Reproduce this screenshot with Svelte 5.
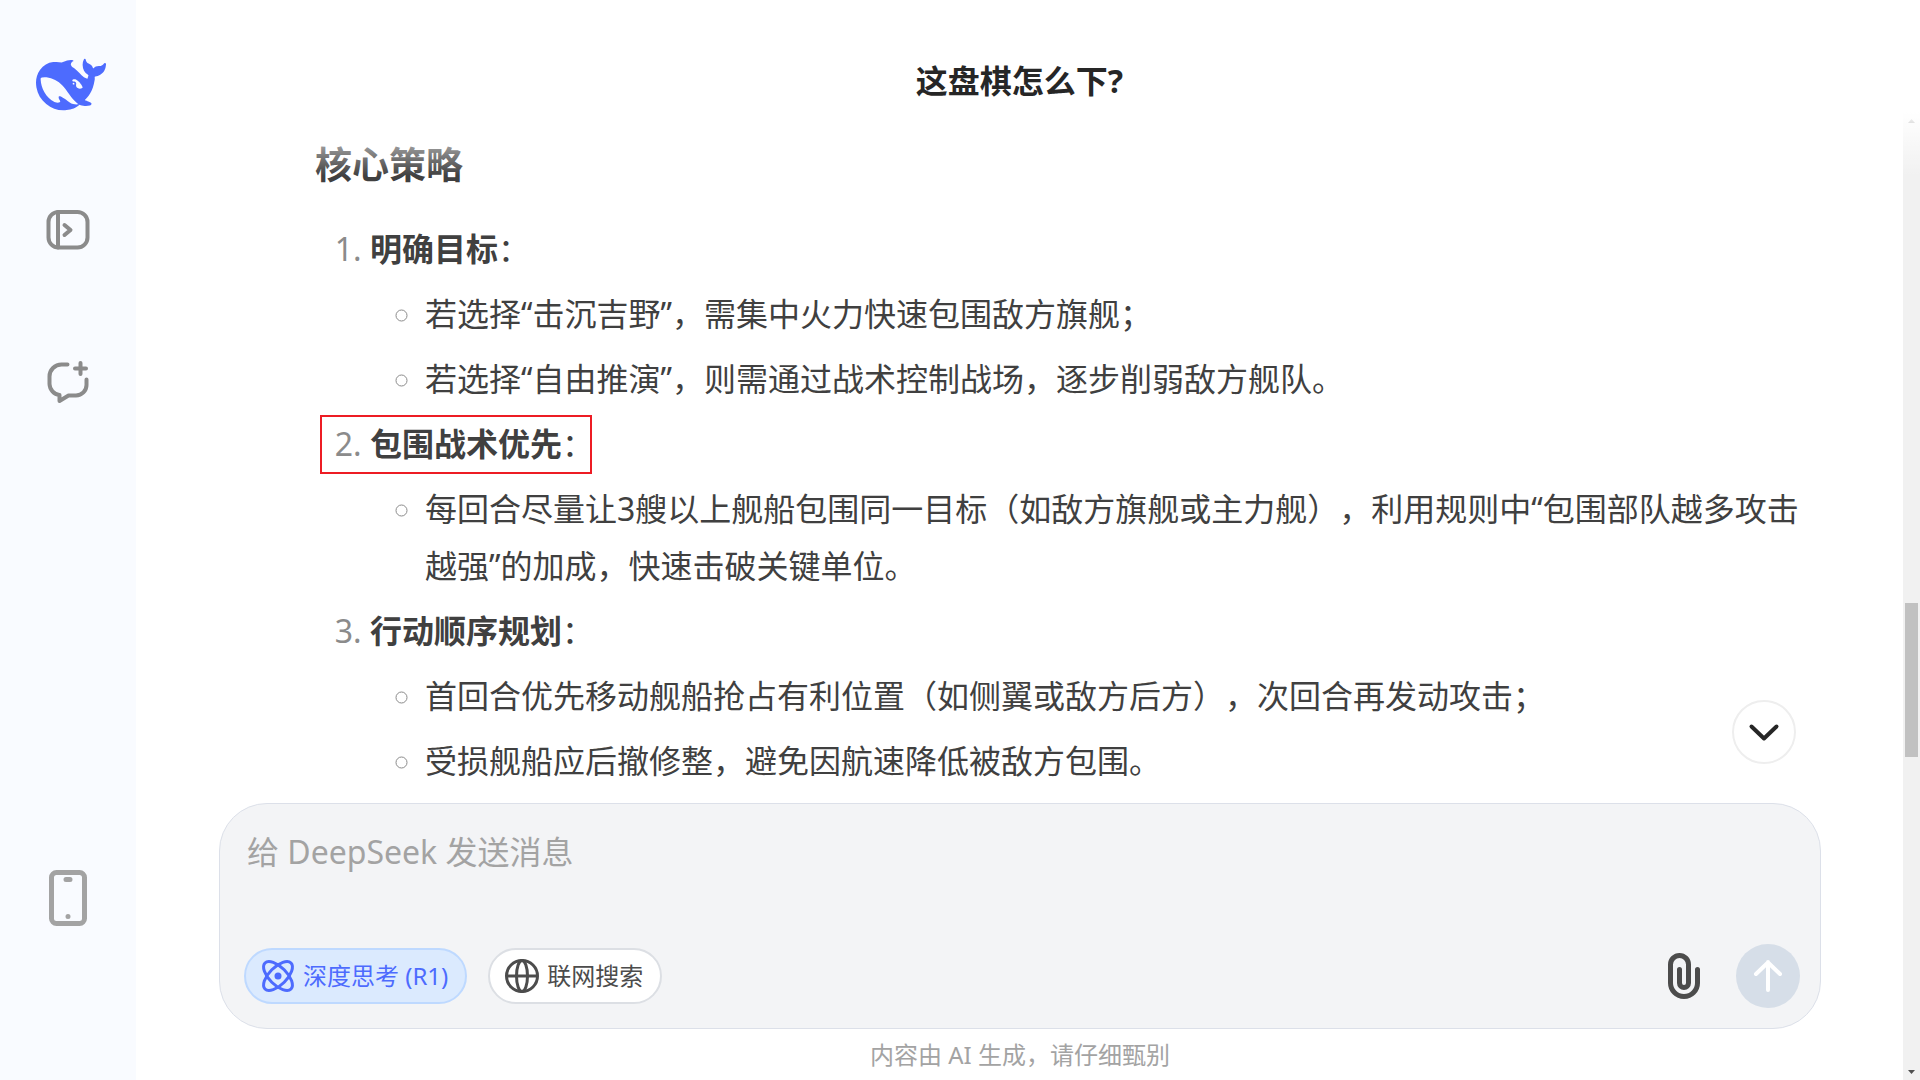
<script lang="ts">
	type Section = {
		title: string;
		marked?: boolean;
		points: string[];
	};

	const title = '这盘棋怎么下?';

	const sections: Section[] = [
		{
			title: '明确目标',
			points: [
				'若选择“击沉吉野”，需集中火力快速包围敌方旗舰；',
				'若选择“自由推演”，则需通过战术控制战场，逐步削弱敌方舰队。'
			]
		},
		{
			title: '包围战术优先',
			marked: true,
			points: [
				'每回合尽量让3艘以上舰船包围同一目标（如敌方旗舰或主力舰），利用规则中“包围部队越多攻击越强”的加成，快速击破关键单位。'
			]
		},
		{
			title: '行动顺序规划',
			points: [
				'首回合优先移动舰船抢占有利位置（如侧翼或敌方后方），次回合再发动攻击；',
				'受损舰船应后撤修整，避免因航速降低被敌方包围。'
			]
		}
	];

	let message = $state('');
	let deepThink = $state(true);
	let webSearch = $state(false);

	function handleSubmit(event: SubmitEvent) {
		event.preventDefault();
		message = '';
	}
</script>

<div class="app">
	<nav class="sidebar">
		<a class="logo" href="/" aria-label="DeepSeek">
			<svg width="70" height="70" viewBox="0 0 24 24" fill="currentColor">
				<path
					d="M23.748 4.482c-.254-.124-.364.113-.512.234-.051.039-.094.09-.137.136-.372.397-.806.657-1.373.626-.829-.046-1.537.214-2.163.848-.133-.782-.575-1.248-1.247-1.548-.352-.156-.708-.311-.955-.65-.172-.241-.219-.51-.305-.774-.055-.16-.11-.323-.293-.35-.2-.031-.278.136-.356.276-.313.572-.434 1.202-.422 1.84.027 1.436.633 2.58 1.838 3.393.137.093.172.187.129.323-.082.28-.18.552-.266.833-.055.179-.137.217-.329.14a5.526 5.526 0 01-1.736-1.18c-.857-.828-1.631-1.742-2.597-2.458a11.365 11.365 0 00-.689-.471c-.985-.957.13-1.743.388-1.836.27-.098.093-.432-.779-.428-.872.004-1.67.295-2.687.684a3.055 3.055 0 01-.465.137 9.597 9.597 0 00-2.883-.102c-1.885.21-3.39 1.102-4.497 2.623C.082 8.606-.231 10.684.152 12.85c.403 2.284 1.569 4.175 3.36 5.653 1.858 1.533 3.997 2.284 6.438 2.14 1.482-.085 3.133-.284 4.994-1.86.47.234.962.327 1.78.397.63.059 1.236-.03 1.705-.128.735-.156.684-.837.419-.961-2.155-1.004-1.682-.595-2.113-.926 1.096-1.296 2.746-2.642 3.392-7.003.05-.347.007-.565 0-.845-.004-.17.035-.237.23-.256a4.173 4.173 0 001.545-.475c1.396-.763 1.96-2.015 2.093-3.517.02-.23-.004-.467-.247-.588zM11.581 18c-2.089-1.642-3.102-2.183-3.52-2.16-.392.024-.321.471-.235.763.09.288.207.486.371.739.114.167.192.416-.113.603-.673.416-1.842-.14-1.897-.167-1.361-.802-2.5-1.86-3.301-3.307-.774-1.393-1.224-2.887-1.298-4.482-.02-.386.093-.522.477-.592a4.696 4.696 0 011.529-.039c2.132.312 3.946 1.265 5.468 2.774.868.86 1.525 1.887 2.202 2.891.72 1.066 1.494 2.082 2.48 2.914.348.292.625.514.891.677-.802.09-2.14.11-3.054-.614zm1-6.44a.306.306 0 01.415-.287.302.302 0 01.2.288.306.306 0 01-.31.307.303.303 0 01-.304-.308zm3.11 1.596c-.2.081-.399.151-.59.16a1.245 1.245 0 01-.798-.254c-.274-.23-.47-.358-.552-.758a1.73 1.73 0 01.016-.588c.07-.327-.008-.537-.239-.727-.187-.156-.426-.199-.688-.199a.559.559 0 01-.254-.078c-.11-.054-.2-.19-.114-.358.028-.054.16-.186.192-.21.356-.202.767-.136 1.146.016.352.144.618.408 1.001.782.391.451.462.576.685.914.176.265.336.537.445.848.067.195-.019.354-.25.452z"
				/>
			</svg>
		</a>
		<button type="button" class="nav-button" aria-label="打开边栏">
			<svg width="48" height="48" viewBox="0 0 48 48">
				<rect x="4.5" y="6" width="39" height="35.5" rx="10" />
				<path d="M14 6v35.5M20.5 19l6 5-6 5" />
			</svg>
		</button>
		<button type="button" class="nav-button chat" aria-label="开启新对话">
			<svg width="48" height="48" viewBox="0 0 48 48">
				<path
					d="M23.5 6.5H17.5A12 12 0 0 0 5.5 18.5V26A11.5 11.5 0 0 0 15.5 37V43L24.5 37.5H32A10.5 10.5 0 0 0 42.5 27V21.5"
				/>
				<path d="M36.5 5v11M31 10.5h11" />
			</svg>
		</button>
		<button type="button" class="nav-button phone" aria-label="下载 App">
			<svg width="48" height="56" viewBox="0 0 48 56">
				<rect x="7.5" y="2.5" width="33" height="51" rx="5" />
				<path d="M22 9.5h4M24 46.5h.01" />
			</svg>
		</button>
	</nav>

	<main>
		<header>
			<h1>{title}</h1>
		</header>
		<div class="body">
			<div class="column">
				<section class="messages">
					<h2>核心策略</h2>
					<ol>
						{#each sections as section}
							<li>
								<p class:marked={section.marked}><strong>{section.title}</strong>：</p>
								<ul>
									{#each section.points as point}
										<li>{point}</li>
									{/each}
								</ul>
							</li>
						{/each}
					</ol>
					<button type="button" class="scroll-down" aria-label="滚动到底部">
						<svg width="32" height="32" viewBox="0 0 32 32">
							<path d="M3.5 10.5L16 22.5 28.5 10.5" />
						</svg>
					</button>
				</section>

				<form class="composer" onsubmit={handleSubmit}>
					<textarea bind:value={message} placeholder="给 DeepSeek 发送消息" aria-label="消息"
					></textarea>
					<div class="toolbar">
						<button
							type="button"
							class="pill"
							class:active={deepThink}
							onclick={() => (deepThink = !deepThink)}
						>
							<svg width="36" height="36" viewBox="0 0 36 36">
								<ellipse cx="18" cy="18" rx="18.4" ry="8.8" transform="rotate(45 18 18)" />
								<ellipse cx="18" cy="18" rx="18.4" ry="8.8" transform="rotate(-45 18 18)" />
								<circle class="dot" cx="18" cy="18" r="3.5" />
							</svg>
							<span>深度思考 (R1)</span>
						</button>
						<button
							type="button"
							class="pill"
							class:active={webSearch}
							onclick={() => (webSearch = !webSearch)}
						>
							<svg width="36" height="36" viewBox="0 0 36 36">
								<circle cx="18" cy="18" r="15.5" />
								<ellipse cx="18" cy="18" rx="5.5" ry="15.5" />
								<path d="M2.5 18h31" />
							</svg>
							<span>联网搜索</span>
						</button>
						<button type="button" class="attach" aria-label="上传附件">
							<svg width="32" height="46" viewBox="0 0 32 46">
								<path
									d="M29.5 16.5V30A13.5 13.5 0 0 1 2.5 30V11.5A9 9 0 0 1 20.5 11.5V30A4.5 4.5 0 0 1 11.5 30V16.5"
								/>
							</svg>
						</button>
						<button type="submit" class="send" aria-label="发送">
							<svg width="32" height="36" viewBox="0 0 32 36">
								<path d="M16 32V4M4 16L16 4.5 28 16" />
							</svg>
						</button>
					</div>
				</form>
				<footer>内容由 AI 生成，请仔细甄别</footer>
			</div>
			<div class="scrollbar" aria-hidden="true">
				<svg width="17" height="17" viewBox="0 0 17 17"><path d="M5 11l3.5-4L12 11z" /></svg>
				<div class="track">
					<div class="thumb"></div>
				</div>
				<svg width="17" height="17" viewBox="0 0 17 17"><path d="M5 7l3.5 4L12 7z" /></svg>
			</div>
		</div>
	</main>
</div>

<style>
	:global(body) {
		margin: 0;
		background: #fff;
	}

	.app {
		display: flex;
		min-height: 100vh;
		font-family: 'Noto Sans', 'Noto Sans CJK SC', sans-serif;
		text-spacing-trim: space-all;
		color: #404040;
	}

	button {
		padding: 0;
		border: none;
		background: none;
		font: inherit;
		color: inherit;
		cursor: pointer;
	}

	svg {
		display: block;
		flex: none;
	}

	.sidebar {
		display: flex;
		flex-direction: column;
		align-items: center;
		flex: none;
		box-sizing: border-box;
		width: 136px;
		padding: 50px 0 154px;
		background: #f9fbff;
	}

	.logo {
		padding-left: 6px;
		margin-bottom: 86px;
		color: #4d6bfe;
	}

	.nav-button {
		color: #8b8b8b;
	}

	.nav-button svg {
		fill: none;
		stroke: currentColor;
		stroke-width: 4;
		stroke-linecap: round;
		stroke-linejoin: round;
	}

	.chat {
		margin-top: 104px;
	}

	.phone {
		margin-top: auto;
		color: #a3a3a3;
	}

	.phone svg {
		stroke-width: 5;
	}

	main {
		display: flex;
		flex-direction: column;
		flex: 1;
		min-width: 0;
	}

	header {
		box-sizing: border-box;
		height: 112px;
		padding: 52px 17px 0 0;
		text-align: center;
	}

	h1 {
		margin: 0;
		font-size: 32px;
		line-height: 57px;
		color: #262626;
	}

	.body {
		position: relative;
		display: flex;
		flex: 1;
	}

	/* fades the text out under the title */
	.body::before {
		content: '';
		position: absolute;
		z-index: 1;
		top: 0;
		left: 0;
		right: 0;
		height: 64px;
		background: linear-gradient(#fff, rgba(255, 255, 255, 0));
		pointer-events: none;
	}

	.column {
		display: flex;
		flex-direction: column;
		flex: 1;
		min-width: 0;
		padding: 0 82px 0 83px;
	}

	.messages {
		position: relative;
		flex: 1;
		padding: 24px 0 0 96px;
		font-size: 32px;
		line-height: 57px;
	}

	h2 {
		margin: 0 0 27px;
		font-size: 37px;
		line-height: 57px;
	}

	ol,
	ul,
	p {
		margin: 0;
	}

	ol,
	ul {
		padding-left: 55px;
	}

	ul {
		list-style: circle;
	}

	li + li,
	ul li {
		margin-top: 8px;
	}

	li::marker {
		color: #8b8b8b;
	}

	.marked {
		position: relative;
		width: fit-content;
	}

	.marked::before {
		content: '';
		position: absolute;
		inset: 0 2px -2px -50px;
		border: 2px solid #ed1c24;
	}

	.scroll-down {
		position: absolute;
		right: 25px;
		bottom: 39px;
		display: grid;
		place-items: center;
		box-sizing: border-box;
		width: 64px;
		height: 64px;
		border: 2px solid #eee;
		border-radius: 50%;
		background: #fff;
		color: #262626;
	}

	.scroll-down svg,
	.attach svg,
	.send svg {
		fill: none;
		stroke: currentColor;
		stroke-width: 4;
		stroke-linecap: round;
		stroke-linejoin: round;
	}

	.composer {
		display: flex;
		flex-direction: column;
		padding: 20px 20px 20px 24px;
		border: 1px solid #dce0e9;
		border-radius: 48px;
		background: #f3f4f6;
	}

	textarea {
		height: 120px;
		padding: 0 3px;
		box-sizing: border-box;
		border: none;
		outline: none;
		resize: none;
		background: none;
		font: inherit;
		font-size: 32px;
		line-height: 56px;
		color: #404040;
	}

	textarea::placeholder {
		color: #a3a3a3;
	}

	.toolbar {
		display: flex;
		align-items: center;
		gap: 21px;
	}

	.pill {
		display: flex;
		align-items: center;
		gap: 7px;
		box-sizing: border-box;
		height: 56px;
		padding: 0 14px;
		border: 2px solid #dcdfe4;
		border-radius: 28px;
		background: #fff;
		font-size: 24px;
		color: #4c4c4c;
	}

	.pill.active {
		border-color: #bed9ff;
		background: #dbeafe;
		color: #4d6bfe;
	}

	.pill svg {
		fill: none;
		stroke: currentColor;
		stroke-width: 3;
	}

	.pill span {
		padding: 0 3px 3px 0;
	}

	.pill .dot {
		fill: currentColor;
		stroke: none;
	}

	.attach {
		margin-left: auto;
		margin-right: 15px;
		color: #4c4c4c;
	}

	.attach svg {
		stroke-width: 5;
	}

	.send {
		display: grid;
		place-items: center;
		width: 64px;
		height: 64px;
		border-radius: 50%;
		background: #d6dee8;
		color: #fff;
	}

	footer {
		font-size: 24px;
		line-height: 51px;
		text-align: center;
		color: #a3a3a3;
	}

	.scrollbar {
		display: flex;
		flex-direction: column;
		flex: none;
		width: 17px;
		background: #f1f1f1;
	}

	.scrollbar svg {
		fill: #505050;
	}

	.track {
		display: flex;
		flex-direction: column;
		flex: 1;
		padding: 0 2px;
	}

	.track::before {
		content: '';
		flex: 474;
	}

	.thumb {
		flex: 154;
		background: #c1c1c1;
	}

	.track::after {
		content: '';
		flex: 306;
	}
</style>
